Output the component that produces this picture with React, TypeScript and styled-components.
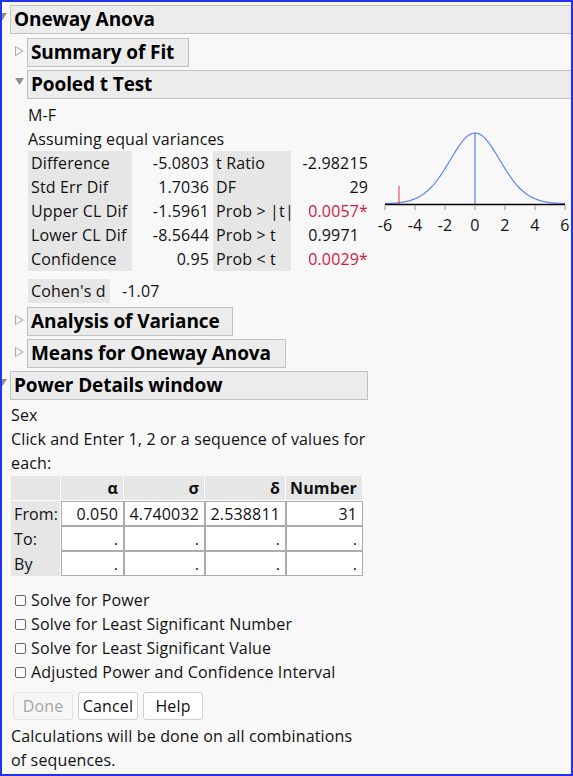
import { ReactNode } from "react";
import styled, { createGlobalStyle } from "styled-components";

const GlobalStyle = createGlobalStyle`
  body {
    margin: 0;
    background: #f8f8f8;
  }
`;

const Frame = styled.div`
  width: 573px;
  height: 776px;
  box-sizing: border-box;
  border: 2px solid #2233ee;
  background: #f8f8f8;
  overflow: hidden;
  padding: 3px 0 0 8px;
  font-family: "Open Sans", "Noto Sans", sans-serif;
  font-size: 16px;
  line-height: 24px;
  letter-spacing: 0.15px;
  color: #111;
`;

/* ---------- outline nodes ---------- */

const Node = styled.div<{ $gap: number }>`
  margin-bottom: ${(p) => p.$gap}px;
`;

const HeadRow = styled.div`
  display: flex;
  align-items: flex-start;
  margin-left: -12px;
`;

const Toggle = styled.svg`
  width: 9px;
  height: 10px;
  flex-shrink: 0;
  margin: 8px 3px 0 0;
`;

const TitleBox = styled.div<{ $width?: number }>`
  box-sizing: border-box;
  height: 29px;
  ${(p) => (p.$width ? `width: ${p.$width}px;` : "flex: 1; margin-right: -4px;")}
  border: 1px solid #c2c2c2;
  background: #ececec;
  padding-left: 3px;
  font-weight: 700;
  font-size: 19px;
  line-height: 27px;
  letter-spacing: -0.1px;
  color: #000;
  white-space: nowrap;
`;

const Body = styled.div<{ $inset: number; $top?: number; $bottom?: number }>`
  padding-left: ${(p) => p.$inset}px;
  padding-top: ${(p) => p.$top ?? 0}px;
  padding-bottom: ${(p) => p.$bottom ?? 0}px;
`;

const Arrow = ({ open }: { open: boolean }) => (
  <Toggle viewBox="0 0 9 10">
    {open ? (
      <polygon points="0,0 9,0 4.5,7" fill="#8f8f8f" />
    ) : (
      <polygon points="0.5,0.5 8,5 0.5,9.5" fill="#f4f4f4" stroke="#a9a9a9" />
    )}
  </Toggle>
);

interface OutlineProps {
  title: string;
  open?: boolean;
  width?: number;
  gap?: number;
  children?: ReactNode;
}

const Outline = ({ title, open = false, width, gap = 3, children }: OutlineProps) => (
  <Node $gap={gap}>
    <HeadRow>
      <Arrow open={open} />
      <TitleBox $width={width}>{title}</TitleBox>
    </HeadRow>
    {open && children}
  </Node>
);

/* ---------- pooled t test ---------- */

const Line = styled.div`
  white-space: nowrap;
`;

const TestRow = styled.div`
  display: flex;
  align-items: flex-start;
`;

const StatGrid = styled.div`
  display: grid;
  grid-template-columns: 104px 81px 78px 77px;
  grid-auto-rows: 24px;
`;

const StatLabel = styled.div`
  background: #e6e6e6;
  padding-left: 3px;
  white-space: nowrap;
`;

const StatValue = styled.div<{ $alert?: boolean; $inset?: number }>`
  text-align: right;
  padding-right: ${(p) => p.$inset ?? 0}px;
  color: ${(p) => (p.$alert ? "#d4173e" : "#111")};
  white-space: nowrap;
`;

const Ghost = styled.span`
  visibility: hidden;
`;

const CohenRow = styled.div`
  display: flex;
  margin-top: 8px;
`;

const CohenLabel = styled(StatLabel)`
  width: 82px;
  box-sizing: border-box;
`;

const CohenValue = styled.div`
  margin-left: 12px;
`;

const Density = styled.svg`
  margin-left: 7px;
  flex-shrink: 0;
  overflow: visible;
`;

const stats: [string, string, string, string, "alert" | "pad" | ""][] = [
  ["Difference", "-5.0803", "t Ratio", "-2.98215", ""],
  ["Std Err Dif", "1.7036", "DF", "29", ""],
  ["Upper CL Dif", "-1.5961", "Prob > |t|", "0.0057*", "alert"],
  ["Lower CL Dif", "-8.5644", "Prob > t", "0.9971", "pad"],
  ["Confidence", "0.95", "Prob < t", "0.0029*", "alert"],
];

// difference scale: t(29) stretched by the std error, 15px per unit, 0 at x=100
const SE = 1.7036;
const curvePath = () => {
  const pts: string[] = [];
  for (let i = 0; i <= 120; i++) {
    const d = -6 + i * 0.1;
    const t = d / SE;
    const y = 101 - 71 * Math.pow(1 + (t * t) / 29, -15);
    pts.push(`${(100 + d * 15).toFixed(2)},${y.toFixed(2)}`);
  }
  return "M" + pts.join(" L");
};

const TDensity = () => (
  <Density width="198" height="135" viewBox="0 0 198 135">
    <path d={curvePath()} fill="none" stroke="#5b86f0" strokeWidth="1.2" />
    <line x1="100" y1="30" x2="100" y2="101" stroke="#3d6ae6" strokeWidth="1" />
    <line x1="24" y1="83" x2="24" y2="101" stroke="#e0304a" strokeWidth="1" />
    <line x1="10" y1="101.5" x2="190" y2="101.5" stroke="#000" strokeWidth="1.4" />
    {[-6, -4, -2, 0, 2, 4, 6].map((v) => (
      <g key={v}>
        <line x1={100 + v * 15} y1="102" x2={100 + v * 15} y2="107" stroke="#9a9a9a" />
        <text
          x={100 + v * 15}
          y="128"
          textAnchor="middle"
          fontFamily="'Open Sans', sans-serif"
          fontSize="16"
          fill="#111"
        >
          {v}
        </text>
      </g>
    ))}
  </Density>
);

/* ---------- power details ---------- */

const PowerTable = styled.table`
  border-collapse: separate;
  border-spacing: 0;
  margin-top: 1px;
  table-layout: fixed;
  width: 352px;
`;

const HeadCell = styled.th<{ $w: number }>`
  width: ${(p) => p.$w}px;
  height: 24px;
  padding: 0 5px 0 0;
  background: #e6e6e6;
  border-right: 1px solid #fff;
  border-bottom: 1px solid #fff;
  text-align: right;
  font-weight: 700;
  box-sizing: border-box;
`;

const RowLabel = styled.td`
  background: #e6e6e6;
  padding: 0 0 0 3px;
  height: 25px;
  box-sizing: border-box;
  border-right: 1px solid #fff;
`;

const Entry = styled.td`
  background: #fff;
  border: 1px solid #ababab;
  padding: 0 5px 0 0;
  height: 25px;
  box-sizing: border-box;
  text-align: right;
  line-height: 22px;
`;

const Checks = styled.div`
  margin-top: 12px;
`;

const CheckRow = styled.label`
  display: flex;
  align-items: center;
  height: 24px;
  padding-left: 4px;
  white-space: nowrap;
`;

const CheckBox = styled.span`
  width: 11px;
  height: 11px;
  box-sizing: border-box;
  border: 1px solid #666;
  border-radius: 2px;
  background: #fbfbfb;
  margin-right: 5px;
  flex-shrink: 0;
`;

const Buttons = styled.div`
  display: flex;
  gap: 5px;
  margin: 8px 0 4px 2px;
`;

const Button = styled.button<{ $disabled?: boolean }>`
  width: 60px;
  height: 28px;
  padding: 0;
  border-radius: 3px;
  border: 1px solid ${(p) => (p.$disabled ? "#e2e2e2" : "#cfcfcf")};
  background: ${(p) => (p.$disabled ? "#f6f6f6" : "#fff")};
  color: ${(p) => (p.$disabled ? "#a6a6a6" : "#111")};
  font: inherit;
  letter-spacing: inherit;
`;

const cols = [50, 63, 81, 81, 77];

const App = () => (
  <Frame>
    <GlobalStyle />
    <Outline title="Oneway Anova" open gap={0}>
      <Body $inset={17} $top={4}>
        <Outline title="Summary of Fit" width={162} />
        <Outline title="Pooled t Test" open gap={4}>
          <Body $inset={1} $top={4} $bottom={0}>
            <TestRow>
              <div>
                <Line>M-F</Line>
                <Line>Assuming equal variances</Line>
                <StatGrid>
                  {stats.map(([l1, v1, l2, v2, flag]) => (
                    <>
                      <StatLabel key={l1}>{l1}</StatLabel>
                      <StatValue $inset={4}>{v1}</StatValue>
                      <StatLabel>{l2}</StatLabel>
                      <StatValue $alert={flag === "alert"}>
                        {v2}
                        {flag === "pad" && <Ghost>*</Ghost>}
                      </StatValue>
                    </>
                  ))}
                </StatGrid>
              </div>
              <TDensity />
            </TestRow>
            <CohenRow>
              <CohenLabel>Cohen's d</CohenLabel>
              <CohenValue>-1.07</CohenValue>
            </CohenRow>
          </Body>
        </Outline>
        <Outline title="Analysis of Variance" width={206} />
        <Outline title="Means for Oneway Anova" width={259} />
      </Body>
    </Outline>
    <Outline title="Power Details window" open width={358}>
      <Body $inset={1} $top={3}>
        <Line>Sex</Line>
        <Line>Click and Enter 1, 2 or a sequence of values for</Line>
        <Line>each:</Line>
        <PowerTable>
          <thead>
            <tr>
              <HeadCell $w={cols[0]} />
              <HeadCell $w={cols[1]}>α</HeadCell>
              <HeadCell $w={cols[2]}>σ</HeadCell>
              <HeadCell $w={cols[3]}>δ</HeadCell>
              <HeadCell $w={cols[4]}>Number</HeadCell>
            </tr>
          </thead>
          <tbody>
            <tr>
              <RowLabel>From:</RowLabel>
              <Entry>0.050</Entry>
              <Entry>4.740032</Entry>
              <Entry>2.538811</Entry>
              <Entry>31</Entry>
            </tr>
            {["To:", "By"].map((r) => (
              <tr key={r}>
                <RowLabel>{r}</RowLabel>
                <Entry>.</Entry>
                <Entry>.</Entry>
                <Entry>.</Entry>
                <Entry>.</Entry>
              </tr>
            ))}
          </tbody>
        </PowerTable>
        <Checks>
          {[
            "Solve for Power",
            "Solve for Least Significant Number",
            "Solve for Least Significant Value",
            "Adjusted Power and Confidence Interval",
          ].map((c) => (
            <CheckRow key={c}>
              <CheckBox />
              {c}
            </CheckRow>
          ))}
        </Checks>
        <Buttons>
          <Button $disabled>Done</Button>
          <Button>Cancel</Button>
          <Button>Help</Button>
        </Buttons>
        <Line>Calculations will be done on all combinations</Line>
        <Line>of sequences.</Line>
      </Body>
    </Outline>
  </Frame>
);

export default App;
